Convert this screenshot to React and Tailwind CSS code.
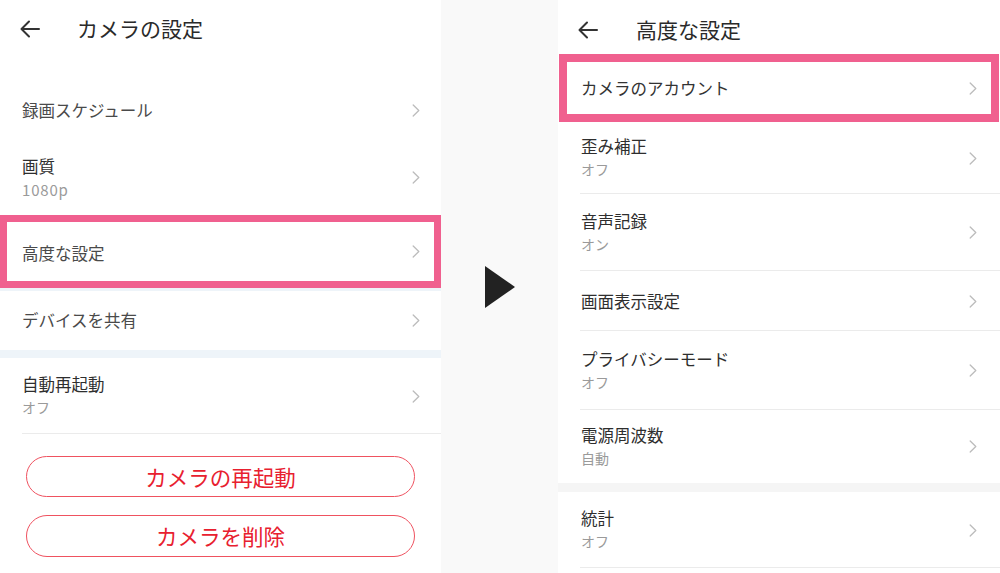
import React from 'react';

const font = { fontFamily: '"Noto Sans CJK JP", "Noto Sans", sans-serif' };

const BackArrow = () => (
    <svg width="20" height="18" viewBox="0 0 20 18" fill="none" stroke="#333" strokeWidth="2" strokeLinecap="round" strokeLinejoin="round">
        <path d="M19 9H2" />
        <path d="M9 1.5L1.5 9L9 16.5" />
    </svg>
);

const Chevron = () => (
    <svg width="8" height="13" viewBox="0 0 8 13" fill="none" stroke="#bcbcbc" strokeWidth="1.3" strokeLinecap="round" strokeLinejoin="round">
        <path d="M1.2 1L6.8 6.5L1.2 12" />
    </svg>
);

// 一行または二行の設定項目
const Row = ({ title, sub, subClass = '', h, pl = 'pl-[22px]', pr = 'pr-[21px]', dark, divider }) => (
    <div className={`flex items-center justify-between ${pl} ${pr} relative`} style={{ height: h }}>
        <div className="flex flex-col">
            <span className={`text-[16.5px] leading-[23px] ${dark || sub ? 'text-[#2e2e2e]' : 'text-[#4a4a4a]'}`}>{title}</span>
            {sub && <span className={`text-[14px] leading-[23px] text-[#9a9a9a] ${subClass}`}>{sub}</span>}
        </div>
        <Chevron />
        {divider && <div className="absolute bottom-0 left-[22px] right-0 h-px bg-[#ebebeb]"></div>}
    </div>
);

const LeftPanel = () => (
    <div className="w-[441px] h-full bg-white flex flex-col">
        <div className="h-[57px] flex items-center pl-[20px]">
            <BackArrow />
            <span className="ml-[37px] text-[21px] text-[#2a2a2a]">カメラの設定</span>
        </div>
        <div className="h-[23px]"></div>
        <Row title="録画スケジュール" h={60} />
        <Row title="画質" sub="1080p" subClass="text-[15px] tracking-[0.8px]" h={75} />
        <div className="h-[73px] border-[7px] border-[#f0608f] flex items-center justify-between pl-[15px] pr-[14px]">
            <span className="text-[16.5px] leading-[23px] text-[#4a4a4a] pt-[3px]">高度な設定</span>
            <Chevron />
        </div>
        <div className="h-[3px] bg-[#eef4f9]"></div>
        <Row title="デバイスを共有" h={59} />
        <div className="h-[8px] bg-[#eef4f9]"></div>
        <Row title="自動再起動" sub="オフ" h={76} divider />
        <div className="flex flex-col gap-[18px] mt-[22px] pl-[26px] w-[415px]">
            <button className="h-[41px] rounded-full border-[1.5px] border-[#ef5260] text-[#e8202f] text-[21.5px] leading-none flex items-center justify-center">
                カメラの再起動
            </button>
            <button className="h-[42px] rounded-full border-[1.5px] border-[#ef5260] text-[#e8202f] text-[21.5px] leading-none flex items-center justify-center">
                カメラを削除
            </button>
        </div>
    </div>
);

const RightPanel = () => (
    <div className="flex-1 h-full bg-white flex flex-col">
        <div className="h-[54px] flex items-center pl-[20px] pt-[5px]">
            <BackArrow />
            <span className="ml-[38px] text-[21px] text-[#2a2a2a]">高度な設定</span>
        </div>
        <div className="h-[68px] mx-[1px] border-[8px] border-[#f0608f] flex items-center justify-between pl-[14px] pr-[14px]">
            <span className="text-[16.5px] leading-[23px] text-[#333] pt-[1px]">カメラのアカウント</span>
            <Chevron />
        </div>
        <Row title="歪み補正" sub="オフ" h={72} pl="pl-[23px]" pr="pr-[23px]" divider />
        <Row title="音声記録" sub="オン" h={77} pl="pl-[23px]" pr="pr-[23px]" divider />
        <Row title="画面表示設定" h={60} pl="pl-[23px]" pr="pr-[23px]" dark divider />
        <Row title="プライバシーモード" sub="オフ" h={79} pl="pl-[23px]" pr="pr-[23px]" divider />
        <Row title="電源周波数" sub="自動" h={73} pl="pl-[23px]" pr="pr-[23px]" />
        <div className="h-[9px] bg-[#f5f5f5]"></div>
        <Row title="統計" sub="オフ" h={76} pl="pl-[23px]" pr="pr-[23px]" divider />
    </div>
);

export default function App() {
    return (
        <div className="w-[1000px] h-[573px] flex bg-[#f9f9f9] overflow-hidden" style={font}>
            <LeftPanel />
            <div className="w-[117px] h-full flex items-center justify-center">
                <svg width="30" height="42" viewBox="0 0 30 42">
                    <polygon points="0,0 30,21 0,42" fill="#222" />
                </svg>
            </div>
            <RightPanel />
        </div>
    );
}
